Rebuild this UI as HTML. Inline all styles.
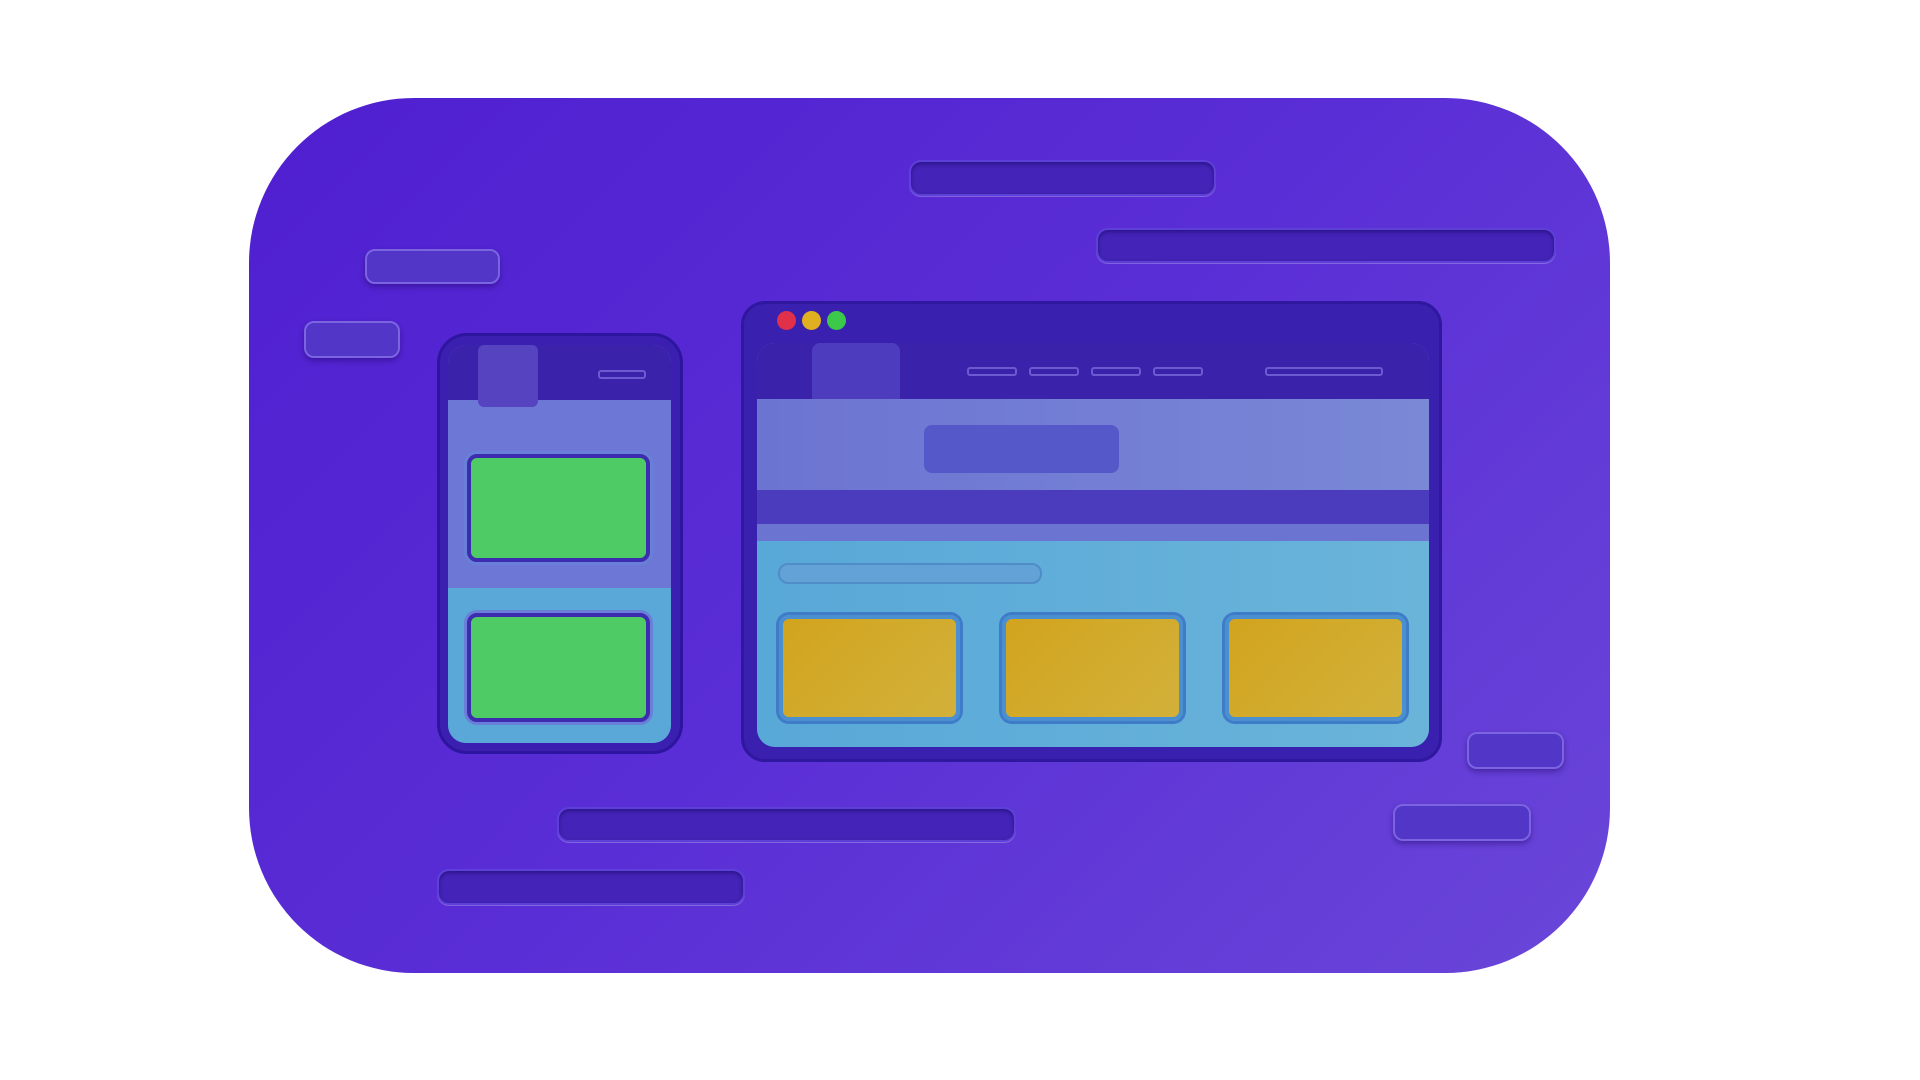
<!DOCTYPE html>
<html><head><style>
body{margin:0;width:1920px;height:1080px;background:#fff;position:relative;overflow:hidden;font-family:"Liberation Sans",sans-serif}
div{position:absolute;box-sizing:border-box}
.card{left:249px;top:98px;width:1361px;height:875px;border-radius:165px;background:linear-gradient(135deg,#4f1fd0 0%,#5a2ed6 50%,#6a46d8 100%)}
.bar{background:#4424b8;border-radius:12px;box-shadow:inset 0 2px 4px rgba(20,0,90,.5),0 1px 0 rgba(255,255,255,.25);border:2px solid #5d40d8}
.pill{background:#5236c8;border-radius:10px;border:2px solid #7a64e0;box-shadow:0 3px 6px rgba(30,0,100,.4)}
.phone{left:437px;top:333px;width:246px;height:421px;border-radius:30px;background:#3b1fb0;border:3px solid #2e15a0}
.scr{overflow:hidden}
.green{background:#4fcb66;border:4px solid #3d2bb0;border-radius:10px;box-shadow:0 0 0 3px #6a7fd8}
.yel{background:linear-gradient(135deg,#d2a41e,#d2b13a);border:4px solid #4a8fd0;border-radius:10px;box-shadow:0 0 0 3px #3f7cc8}
.dot{width:19px;height:19px;border-radius:50%;top:311px}
</style></head><body>
<div class="card"></div>
<div class="bar" style="left:909px;top:160px;width:307px;height:36px"></div>
<div class="bar" style="left:1096px;top:228px;width:460px;height:35px"></div>
<div class="pill" style="left:365px;top:249px;width:135px;height:35px"></div>
<div class="pill" style="left:304px;top:321px;width:96px;height:37px"></div>
<div class="bar" style="left:557px;top:807px;width:459px;height:35px"></div>
<div class="bar" style="left:437px;top:869px;width:308px;height:36px"></div>
<div class="pill" style="left:1467px;top:732px;width:97px;height:37px"></div>
<div class="pill" style="left:1393px;top:804px;width:138px;height:37px"></div>

<div class="phone"></div>
<div class="scr" style="left:448px;top:345px;width:223px;height:398px;border-radius:18px;background:#6d78d6">
  <div style="left:0;top:0;width:223px;height:55px;background:#3a22aa"></div>
  <div style="left:30px;top:0;width:60px;height:62px;background:#5543c0;border-radius:6px"></div>
  <div style="left:150px;top:25px;width:48px;height:9px;border:2px solid #6c5ad0;border-radius:3px"></div>
  <div style="left:0;top:243px;width:223px;height:155px;background:#5aa8d8"></div>
</div>
<div class="green" style="left:467px;top:454px;width:183px;height:108px"></div>
<div class="green" style="left:467px;top:613px;width:183px;height:109px"></div>

<div style="left:741px;top:301px;width:701px;height:461px;border-radius:24px;background:#3a20ae;border:3px solid #2f17a0"></div>
<div class="dot" style="left:777px;background:#e0304a"></div>
<div class="dot" style="left:802px;background:#e0b020"></div>
<div class="dot" style="left:827px;background:#3cc84a"></div>
<div class="scr" style="left:757px;top:343px;width:672px;height:404px;border-radius:18px;background:#6a78d4">
  <div style="left:0;top:0;width:672px;height:56px;background:#3a22aa"></div>
  <div style="left:55px;top:0;width:88px;height:92px;background:#4e3cbf;border-radius:8px"></div>
  <div style="left:210px;top:24px;width:50px;height:9px;border:2px solid #6c5ad0;border-radius:3px"></div>
  <div style="left:272px;top:24px;width:50px;height:9px;border:2px solid #6c5ad0;border-radius:3px"></div>
  <div style="left:334px;top:24px;width:50px;height:9px;border:2px solid #6c5ad0;border-radius:3px"></div>
  <div style="left:396px;top:24px;width:50px;height:9px;border:2px solid #6c5ad0;border-radius:3px"></div>
  <div style="left:508px;top:24px;width:118px;height:9px;border:2px solid #6c5ad0;border-radius:3px"></div>
  <div style="left:0;top:56px;width:672px;height:91px;background:linear-gradient(90deg,#6c74d2,#7a88d6)"></div>
  <div style="left:167px;top:82px;width:195px;height:48px;background:#5558c8;border-radius:8px"></div>
  <div style="left:0;top:147px;width:672px;height:34px;background:#4a3cbc"></div>
  <div style="left:0;top:181px;width:672px;height:17px;background:#6c74d2"></div>
  <div style="left:0;top:198px;width:672px;height:206px;background:linear-gradient(90deg,#58a8d8,#6ab4da)"></div>
  <div style="left:21px;top:220px;width:264px;height:21px;background:#62a2d6;border-radius:10px;border:2px solid #4f8cc8"></div>
</div>
<div class="yel" style="left:779px;top:615px;width:181px;height:106px"></div>
<div class="yel" style="left:1002px;top:615px;width:181px;height:106px"></div>
<div class="yel" style="left:1225px;top:615px;width:181px;height:106px"></div>
</body></html>
